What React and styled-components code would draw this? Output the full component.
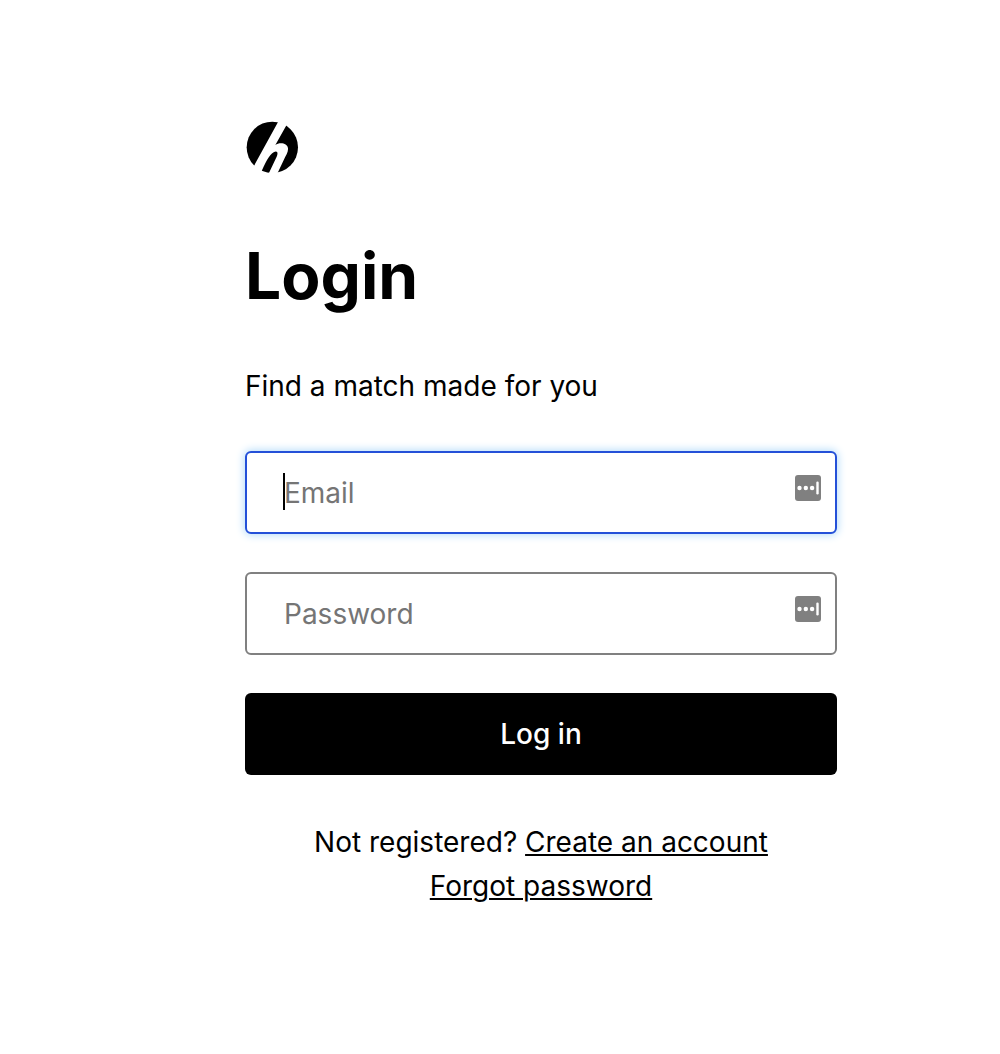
import React from 'react';
import styled, { createGlobalStyle } from 'styled-components';

const GlobalStyle = createGlobalStyle`
  *, *::before, *::after {
    box-sizing: border-box;
  }

  body {
    margin: 0;
    background-color: #fff;
    color: #000;
    font-family: Inter, Roboto, sans-serif;
    font-size: 28px;
    line-height: 44px;
  }
`;

const Page = styled.main`
  padding: 120px 163px 64px 245px;
`;

const Logo = styled.svg`
  display: block;
  width: 54px;
  height: 54px;
`;

const Title = styled.h1`
  margin: 64px 0 50px;
  font-size: 64px;
  font-weight: 700;
  line-height: 76px;
`;

const Intro = styled.p`
  margin: 0 0 43px;
`;

const Form = styled.form`
  display: flex;
  flex-direction: column;
  gap: 38px;
`;

const Field = styled.label`
  display: block;
  position: relative;
`;

const Input = styled.input`
  display: block;
  width: 100%;
  height: 83px;
  padding: 0 64px 0 37px;
  border: 2px solid ${({ $active }) => ($active ? '#2450d8' : '#808080')};
  border-radius: 6px;
  outline: none;
  background-color: #fff;
  box-shadow: ${({ $active }) => ($active ? '0 0 8px 1px #b4dcfa' : 'none')};
  color: #000;
  font: inherit;

  &::placeholder {
    color: #757575;
    opacity: 1;
  }
`;

const Caret = styled.span`
  position: absolute;
  top: 22px;
  left: 38px;
  width: 2px;
  height: 37px;
  background-color: #000;
`;

const FieldIcon = styled.svg`
  position: absolute;
  top: 24px;
  right: 16px;
  width: 26px;
  height: 26px;
`;

const Button = styled.button`
  height: 82px;
  border: 0;
  border-radius: 6px;
  background-color: #000;
  color: #fff;
  font: inherit;
  font-weight: 500;
  cursor: pointer;
`;

const Links = styled.p`
  display: flex;
  flex-direction: column;
  align-items: center;
  margin: 45px 0 0;
`;

const Link = styled.a`
  color: inherit;
  text-decoration: underline;
  text-decoration-thickness: 2px;
  text-underline-offset: 2px;
`;

const PasswordManagerIcon = () => (
  <FieldIcon viewBox="0 0 26 26" aria-hidden="true">
    <rect width="26" height="26" rx="3" fill="#808080" />
    <circle cx="4.5" cy="13" r="2.2" fill="#fff" />
    <circle cx="10.8" cy="13" r="2.2" fill="#fff" />
    <circle cx="17.1" cy="13" r="2.2" fill="#fff" />
    <rect x="21.3" y="6.5" width="2.4" height="13" rx="1.2" fill="#fff" />
  </FieldIcon>
);

const LoginField = ({ type, name, placeholder, active }) => (
  <Field>
    <Input
      type={type}
      name={name}
      placeholder={placeholder}
      aria-label={placeholder}
      $active={active}
    />
    {active && <Caret />}
    <PasswordManagerIcon />
  </Field>
);

const App = () => {
  return (
    <>
      <GlobalStyle />
      <Page>
        <Logo viewBox="27 29 162 162" aria-hidden="true">
          <circle cx="109" cy="111" r="77" />
          <path
            fill="#fff"
            d="M130 28 L153 42 L118 104 C130 95 154 97 156 114 C157 125 150 135 145 145 L122 194 L96 194 L122 139 C128 125 122 120 113 126 C99 135 87 158 74 190 L51 172 Z"
          />
        </Logo>
        <Title>Login</Title>
        <Intro>Find a match made for you</Intro>
        <Form onSubmit={(e) => e.preventDefault()}>
          <LoginField type="email" name="email" placeholder="Email" active />
          <LoginField type="password" name="password" placeholder="Password" />
          <Button type="submit">Log in</Button>
        </Form>
        <Links>
          <span>
            Not registered? <Link href="#register">Create an account</Link>
          </span>
          <Link href="#forgot">Forgot password</Link>
        </Links>
      </Page>
    </>
  );
};

export default App;
